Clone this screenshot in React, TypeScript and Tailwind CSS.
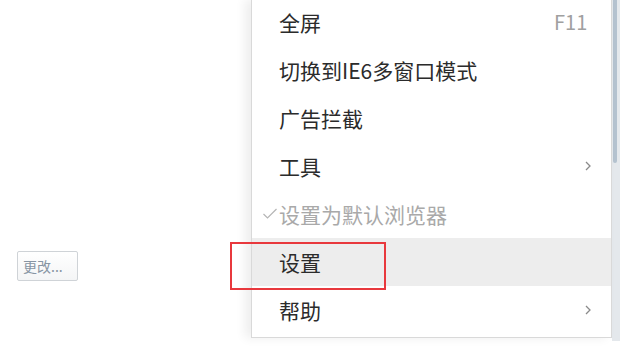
const items: { label: string; hint?: string; arrow?: boolean; checked?: boolean; disabled?: boolean; hover?: boolean }[] = [
  { label: "全屏", hint: "F11" },
  { label: "切换到IE6多窗口模式" },
  { label: "广告拦截" },
  { label: "工具", arrow: true },
  { label: "设置为默认浏览器", checked: true, disabled: true },
  { label: "设置", hover: true },
  { label: "帮助", arrow: true },
];

function Chevron() {
  return (
    <svg width="8" height="12" viewBox="0 0 8 12" className="absolute left-[332px] top-1/2 -translate-y-1/2">
      <polyline points="2,2 6,6 2,10" fill="none" stroke="#8a8a8a" strokeWidth="1.3" />
    </svg>
  );
}

function Check() {
  return (
    <svg width="16" height="12" viewBox="0 0 16 12" className="absolute left-[10px] top-1/2 -translate-y-1/2">
      <polyline points="1.5,6 5.5,10 14.5,1" fill="none" stroke="#b5b5b5" strokeWidth="1.2" />
    </svg>
  );
}

export default function App() {
  return (
    <div
      className="w-[620px] h-[347px] bg-white flex overflow-hidden"
      style={{ fontFamily: '"Noto Sans CJK SC", "Noto Sans", sans-serif' }}
    >
      {/* page behind the menu */}
      <div className="flex-1 relative">
        <div className="pl-[17px] pt-[251px]">
          <button className="w-[61px] h-[30px] border border-[#cfd3d7] rounded-[2px] bg-gradient-to-b from-white to-[#f4f5f6] text-[14px] text-[#8795a3] text-left pl-[5px] leading-[28px]">
            更改...
          </button>
        </div>
      </div>

      {/* context menu */}
      <div className="w-[361px] h-[339px] -mt-[1px] bg-white border border-[#d9d9d9] border-t-0 shadow-[-6px_0_10px_rgba(0,0,0,0.07)] relative">
        <div className="-mt-[1px]">
          {items.map((it) => (
            <div
              key={it.label}
              className={`relative h-[48px] flex items-center pl-[27px] text-[21px] ${it.hover ? "bg-[#ededed]" : ""} ${it.disabled ? "text-[#a9a9a9]" : "text-[#2b2b2b]"}`}
            >
              {it.checked && <Check />}
              <span className="leading-none">{it.label}</span>
              {it.hint && (
                <span className="absolute left-[302px] text-[20px] text-[#a0a0a0] leading-none">{it.hint}</span>
              )}
              {it.arrow && <Chevron />}
            </div>
          ))}
        </div>
        {/* highlight annotation */}
        <div className="absolute left-[-22px] top-[243px] w-[156px] h-[48px] border-2 border-[#e8383d] pointer-events-none" />
      </div>

      {/* page scrollbar */}
      <div className="w-[8px] h-[341px] bg-[#e4e8ec] flex flex-col">
        <div className="ml-[1px] w-[4px] h-[163px] bg-[#b4c2cf] rounded-b-[2px]" />
      </div>
    </div>
  );
}
